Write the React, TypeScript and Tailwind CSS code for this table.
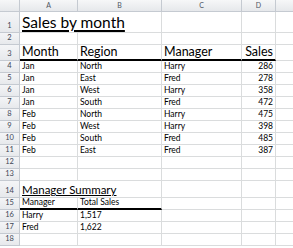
import React from "react";

type Row = {
  n: number;
  h: string;
  cells: [string, string, string, string];
  kind?: "title" | "head" | "data" | "summaryTitle" | "summaryHead";
};

const rows: Row[] = [
  { n: 1, h: "h-[21px]", cells: ["Sales by month", "", "", ""], kind: "title" },
  { n: 2, h: "h-[12px]", cells: ["", "", "", ""] },
  { n: 3, h: "h-[16px]", cells: ["Month", "Region", "Manager", "Sales"], kind: "head" },
  { n: 4, h: "h-[12px]", cells: ["Jan", "North", "Harry", "286"], kind: "data" },
  { n: 5, h: "h-[12px]", cells: ["Jan", "East", "Fred", "278"], kind: "data" },
  { n: 6, h: "h-[12px]", cells: ["Jan", "West", "Harry", "358"], kind: "data" },
  { n: 7, h: "h-[12px]", cells: ["Jan", "South", "Fred", "472"], kind: "data" },
  { n: 8, h: "h-[12px]", cells: ["Feb", "North", "Harry", "475"], kind: "data" },
  { n: 9, h: "h-[12px]", cells: ["Feb", "West", "Harry", "398"], kind: "data" },
  { n: 10, h: "h-[12px]", cells: ["Feb", "South", "Fred", "485"], kind: "data" },
  { n: 11, h: "h-[12px]", cells: ["Feb", "East", "Fred", "387"], kind: "data" },
  { n: 12, h: "h-[12px]", cells: ["", "", "", ""] },
  { n: 13, h: "h-[12px]", cells: ["", "", "", ""] },
  { n: 14, h: "h-[17px]", cells: ["Manager Summary", "", "", ""], kind: "summaryTitle" },
  { n: 15, h: "h-[12px]", cells: ["Manager", "Total Sales", "", ""], kind: "summaryHead" },
  { n: 16, h: "h-[12px]", cells: ["Harry", "1,517", "", ""], kind: "data" },
  { n: 17, h: "h-[12px]", cells: ["Fred", "1,622", "", ""], kind: "data" },
  { n: 18, h: "h-[12px]", cells: ["", "", "", ""] },
];

const widths = ["w-[58px]", "w-[84px]", "w-[80px]", "w-[34px]"];
const grid = "border-r border-b border-[#dadcdd]";

export default function App() {
  return (
    <div
      className="w-[293px] h-[248px] overflow-hidden bg-white text-black"
      style={{ fontFamily: "Lato, 'Liberation Sans', sans-serif" }}
    >
      {/* column letters */}
      <div className="flex h-[12px]">
        <div className="w-[20px] shrink-0 border-r border-b border-[#c5cad1] bg-gradient-to-b from-[#f6f7f8] to-[#e6e8eb]" />
        {["A", "B", "C", "D"].map((c, i) => (
          <div
            key={c}
            className={`${widths[i]} shrink-0 flex items-center justify-center border-r border-b border-[#c5cad1] bg-gradient-to-b from-[#f6f7f8] to-[#e6e8eb] text-[7px] text-[#4d5563]`}
          >
            {c}
          </div>
        ))}
        <div className="flex-1 border-b border-[#c5cad1] bg-gradient-to-b from-[#f6f7f8] to-[#e6e8eb]" />
      </div>

      {rows.map((r) => {
        const spanA = r.kind === "title" || r.kind === "summaryTitle";
        return (
          <div key={r.n} className={`flex ${r.h}`}>
            <div className="w-[20px] shrink-0 flex items-end justify-center pb-[1px] border-r border-b border-[#c5cad1] bg-gradient-to-b from-[#f4f5f7] to-[#e7e9ec] text-[7.5px] leading-[10px] text-[#3f4756]">
              {r.n}
            </div>

            {spanA ? (
              <>
                <div className={`w-[142px] shrink-0 flex items-end pl-[2px] ${grid}`}>
                  {r.kind === "title" ? (
                    <span className="text-[15.5px] leading-[19px] underline decoration-[1.5px] underline-offset-[2px]">
                      {r.cells[0]}
                    </span>
                  ) : (
                    <span className="text-[11.5px] leading-[14px] underline decoration-1 underline-offset-[1px]">
                      {r.cells[0]}
                    </span>
                  )}
                </div>
                <div className={`${widths[2]} shrink-0 ${grid}`} />
                <div className={`${widths[3]} shrink-0 ${grid}`} />
              </>
            ) : (
              r.cells.map((c, i) => {
                const isHead = r.kind === "head";
                const isSumHead = r.kind === "summaryHead";
                const thick =
                  (isHead && i < 4) || (isSumHead && i < 2)
                    ? "border-b-2 border-b-black"
                    : "";
                const right = i === 3 && r.kind === "data";
                return (
                  <div
                    key={i}
                    className={`${widths[i]} shrink-0 flex items-end px-[2px] ${grid} ${thick} ${
                      right || (isHead && i === 3) ? "justify-end" : ""
                    } ${
                      isHead
                        ? "text-[12.5px] leading-[14px]"
                        : "text-[8.5px] leading-[11px]"
                    }`}
                  >
                    {c}
                  </div>
                );
              })
            )}
            <div className="flex-1 border-b border-[#dadcdd]" />
          </div>
        );
      })}
    </div>
  );
}
